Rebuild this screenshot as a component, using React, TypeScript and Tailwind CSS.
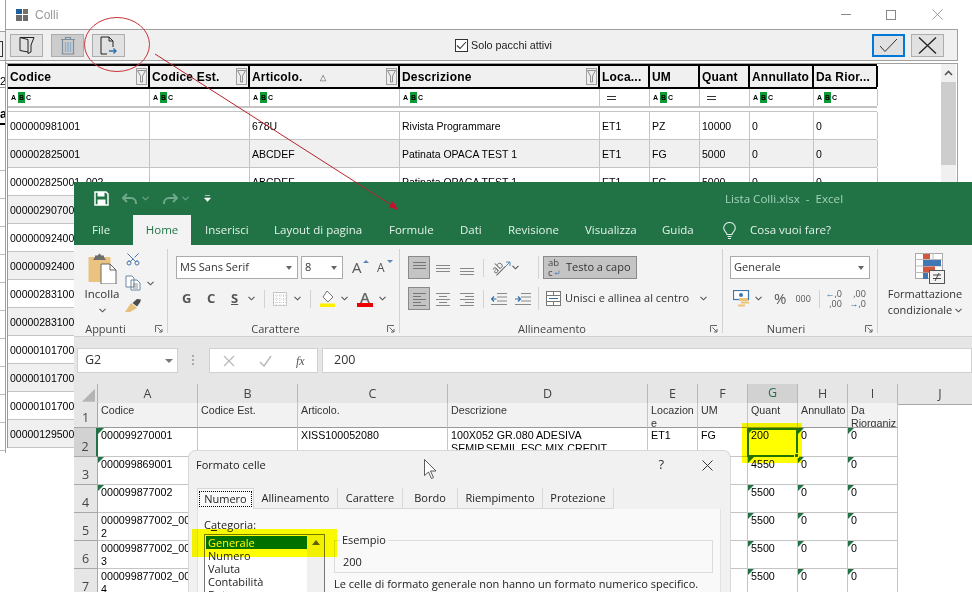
import React from 'react';
import { Scissors } from 'lucide-react';

const arial = "[font-family:'Liberation_Sans',sans-serif]";
const ui = "[font-family:'Open_Sans',sans-serif]";

const backRows = [
  ['000000981001', '', '678U', 'Rivista Programmare', 'ET1', 'PZ', '10000', '0', '0'],
  ['000002825001', '', 'ABCDEF', 'Patinata OPACA TEST 1', 'ET1', 'FG', '5000', '0', '0'],
  ['000002825001_002', '', 'ABCDEF', 'Patinata OPACA TEST 1', 'ET1', 'FG', '5000', '0', '0'],
  ['000002907001'], ['000000924001'], ['000000924002'], ['000002831001'], ['000002831002'],
  ['000001017001'], ['000001017002'], ['000001017003'], ['000001295001'],
];

const backHeaders = [
  { label: 'Codice', filter: true },
  { label: 'Codice Est.', filter: true },
  { label: 'Articolo.', filter: true, sort: true },
  { label: 'Descrizione', filter: true },
  { label: 'Loca...' },
  { label: 'UM' },
  { label: 'Quant' },
  { label: 'Annullato' },
  { label: 'Da Rior...' },
];

const backFilters = ['abc', 'abc', 'abc', 'abc', 'eq', 'abc', 'eq', 'abc', 'abc'];
const backCols = 'grid grid-cols-[142px_100px_150px_200px_50px_50px_50px_64px_64px]';
const sheetCols = 'grid grid-cols-[24px_100px_100px_150px_200px_50px_50px_50px_50px_50px_1fr]';

const tabs = [
  { label: 'Inserisci', w: 'w-[69px]' },
  { label: 'Layout di pagina', w: 'w-[115px]' },
  { label: 'Formule', w: 'w-[71px]' },
  { label: 'Dati', w: 'w-[48px]' },
  { label: 'Revisione', w: 'w-[77px]' },
  { label: 'Visualizza', w: 'w-[77px]' },
  { label: 'Guida', w: 'w-[60px]' },
];

type SheetRow = { n: number; h: string; cells: string[][] };

const sheetRows: SheetRow[] = [
  { n: 2, h: 'h-[29px]', cells: [['000099270001'], [], ['XISS100052080'], ['100X052 GR.080 ADESIVA', 'SEMIP.SEMIL.FSC MIX CREDIT'], ['ET1'], ['FG'], ['200'], ['0'], ['0']] },
  { n: 3, h: 'h-[28px]', cells: [['000099869001'], [], [], [], [], [], ['4550'], ['0'], ['0']] },
  { n: 4, h: 'h-[28px]', cells: [['000099877002'], [], [], [], [], [], ['5500'], ['0'], ['0']] },
  { n: 5, h: 'h-[28px]', cells: [['000099877002_00', '2'], [], [], [], [], [], ['5500'], ['0'], ['0']] },
  { n: 6, h: 'h-[28px]', cells: [['000099877002_00', '3'], [], [], [], [], [], ['5500'], ['0'], ['0']] },
  { n: 7, h: 'h-[28px]', cells: [['000099877002_00', '4'], [], [], [], [], [], ['5500'], ['0'], ['0']] },
];

function Chevron({ className = 'text-[#555]' }: { className?: string }) {
  return (
    <svg width="7" height="5" viewBox="0 0 7 5" className={className}>
      <path d="M0.5 0.8 3.5 3.8 6.5 0.8" fill="none" stroke="currentColor" strokeWidth="1.1" />
    </svg>
  );
}

function Launcher() {
  return (
    <svg width="8" height="8" viewBox="0 0 8 8">
      <path d="M0.5 7V0.5H7M2.5 2.5 7 7M7 4V7H4" fill="none" stroke="#666" strokeWidth="1" />
    </svg>
  );
}

function Funnel() {
  return (
    <span className="ml-auto mr-[1px] flex h-[17px] w-[11px] shrink-0 items-center justify-center border border-[#a0a0a0] bg-[#eeeeee]">
      <svg width="9" height="13" viewBox="0 0 9 13">
        <path d="M0.5 0.5h8L5.5 6v6h-2V6z" fill="none" stroke="#777" strokeWidth="0.8" />
      </svg>
    </span>
  );
}

function AbcTag() {
  return (
    <span className={`flex h-[11px] items-center pl-[3px] text-[7px] font-bold leading-none text-black ${arial}`}>
      <span className="mr-[2px]">A</span>
      <span className="mr-[1px] flex h-[11px] w-[7px] items-center justify-center bg-[#109a35]">B</span>
      <span>C</span>
    </span>
  );
}

function ToolButton({ children, dim = false }: { children: React.ReactNode; dim?: boolean }) {
  return (
    <div className={`flex h-[23px] w-[33px] items-center justify-center border border-[#adadad] ${dim ? 'bg-[#cccccc]' : 'bg-[#e1e1e1]'}`}>
      {children}
    </div>
  );
}

function BackWindow() {
  return (
    <div className={`absolute left-[5px] top-0 h-[453px] w-[953px] border-l border-[#a0a0a0] bg-white ${arial}`}>
      <div className="flex h-[30px] items-center border-b border-[#a0a0a0] bg-white pl-[10px]">
        <div className="grid h-[12px] w-[12px] grid-cols-2 gap-[1px]">
          <span className="bg-[#1d5f9b]" />
          <span className="bg-[#7a6f64]" />
          <span className="bg-[#6b6b6b]" />
          <span className="bg-[#6b6b6b]" />
        </div>
        <span className="ml-[7px] text-[12px] text-[#9a9a9a]">Colli</span>
        <div className="ml-auto flex items-center">
          <span className="h-px w-[10px] bg-[#888]" />
          <span className="ml-[35px] h-[10px] w-[10px] border border-[#888]" />
          <svg width="11" height="11" viewBox="0 0 11 11" className="ml-[36px] mr-[15px]">
            <path d="M0.5 0.5 10.5 10.5M10.500 0.5 0.5 10.500" stroke="#888" strokeWidth="0.8" />
          </svg>
        </div>
      </div>

      <div className="flex h-[31px] items-center border-b border-r border-[#a0a0a0] bg-[#f0f0f0] pl-[4px]">
        <ToolButton>
          <svg width="16" height="18" viewBox="0 0 16 18">
            <path d="M1 1.500h14L12 9v7l-3 1.500V3.500L1 1.500v13l8 1.500" fill="none" stroke="#222" strokeWidth="1" />
          </svg>
        </ToolButton>
        <div className="ml-[8px]">
          <ToolButton dim>
            <svg width="16" height="19" viewBox="0 0 16 19">
              <path d="M1 3.500h14M5.500 3.500v-2h5v2M2.500 3.500v14.500h11V3.500" fill="none" stroke="#7d8f9c" strokeWidth="1.200" />
              <path d="M5.500 6v10M8 6v10M10.500 6v10" stroke="#8fb0cc" strokeWidth="1.400" />
            </svg>
          </ToolButton>
        </div>
        <div className="ml-[8px]">
          <ToolButton>
            <svg width="17" height="19" viewBox="0 0 17 19">
              <path d="M7 18H1V1h8l4 4v6M9 1v4h4" fill="none" stroke="#222" strokeWidth="1" />
              <path d="M9 15h7M13.500 12.500 16 15l-2.500 2.500" fill="none" stroke="#2f6fa8" strokeWidth="1.400" />
            </svg>
          </ToolButton>
        </div>
        <div className="ml-[330px] flex items-center">
          <span className="flex h-[13px] w-[13px] items-center justify-center border border-[#333] bg-white">
            <svg width="11" height="9" viewBox="0 0 11 9">
              <path d="M1 4.500 4 7.500 10 1" fill="none" stroke="#333" strokeWidth="1.100" />
            </svg>
          </span>
          <span className="ml-[3px] text-[10.800px] text-[#222]">Solo pacchi attivi</span>
        </div>
        <div className="ml-auto mr-[13px] flex items-center gap-[6px]">
          <div className="flex h-[23px] w-[33px] items-center justify-center border-2 border-[#0078d7] bg-[#e1e1e1]">
            <svg width="19" height="15" viewBox="0 0 19 15">
              <path d="M1 8 6 13.500 18 1" fill="none" stroke="#333" strokeWidth="1" />
            </svg>
          </div>
          <ToolButton>
            <svg width="19" height="17" viewBox="0 0 19 17">
              <path d="M1 0.500 18 16.500M18 0.500 1 16.500" stroke="#222" strokeWidth="1.300" />
            </svg>
          </ToolButton>
        </div>
      </div>

      <div className="mt-[2px] h-[389px] border-r border-t border-[#a0a0a0]">
        <div className="flex">
          <div className="ml-px w-[870px] border-l border-[#999]">
            <div className={`${backCols} h-[25px] border-y-2 border-black bg-[#f0f0f0] text-[12px] font-bold tracking-[0.2px] text-black`}>
              {backHeaders.map((h) => (
                <div key={h.label} className="relative flex items-center border-r-2 border-black pl-[2px]">
                  <span className="whitespace-nowrap">{h.label}</span>
                  {h.sort && <span className="absolute left-[70px] top-[6px] text-[8px] text-[#888]">△</span>}
                  {h.filter && <Funnel />}
                </div>
              ))}
            </div>
            <div className={`${backCols} h-[19px] border-b-2 border-[#c4c4c4] bg-white`}>
              {backFilters.map((f, i) => (
                <div key={i} className="flex items-center border-r border-[#c4c4c4]">
                  {f === 'abc' ? <AbcTag /> : <span className="mx-[7px] h-[4px] w-[9px] border-y border-[#333]" />}
                </div>
              ))}
            </div>
            <div className="h-[4px] border-b border-[#c4c4c4]" />
            {backRows.map((row, i) => (
              <div key={i} className={`${backCols} h-[28px] border-b border-[#c4c4c4] text-[10.500px] text-black ${i % 2 === 1 ? 'bg-[#f0f0f0]' : 'bg-white'}`}>
                {backHeaders.map((h, c) => (
                  <div key={h.label} className="flex items-center overflow-hidden whitespace-nowrap border-r border-[#c4c4c4] pl-[2px] pt-[2px]">
                    {row[c] ?? ''}
                  </div>
                ))}
              </div>
            ))}
          </div>
          <div className="ml-[64px] flex h-[120px] w-[15px] flex-col bg-[#f0f0f0]">
            <div className="flex h-[18px] items-center justify-center">
              <svg width="9" height="6" viewBox="0 0 9 6">
                <path d="M1 5 4.500 1.500 8 5" fill="none" stroke="#555" strokeWidth="1.600" />
              </svg>
            </div>
            <div className="h-[83px] bg-[#cdcdcd]" />
          </div>
        </div>
      </div>
    </div>
  );
}

function BehindStrip() {
  return (
    <div className={`absolute left-0 top-[31px] flex h-[420px] w-[5px] flex-col bg-[#f0f0f0] text-[11px] text-black ${arial}`}>
      <div className="h-[30px] border-y border-[#a0a0a0]">
        <div className="mt-[9px] h-[16px] w-[3px] border-y border-r border-[#333]" />
      </div>
      <div className="h-[26px] bg-white pt-[15px] leading-none">2</div>
      <div className="h-[37px] border-t border-[#999] bg-white pt-[20px] text-[12px] font-bold leading-none">a</div>
      <div className="h-[20px] border-t-2 border-black bg-white" />
      {Array.from({ length: 11 }).map((_, i) => (
        <div key={i} className="h-[28px] shrink-0 border-b border-[#bbb] bg-white" />
      ))}
    </div>
  );
}

function Bars({ lines, dark = false }: { lines: number[][]; dark?: boolean }) {
  return (
    <svg width="15" height="16" viewBox="0 0 15 16">
      {lines.map((l, i) => (
        <path key={i} d={`M${l[0]} ${l[2]}.5H${l[1]}`} stroke={dark ? '#777' : '#888'} strokeWidth="1" />
      ))}
    </svg>
  );
}

function Sep({ className = 'h-[23px]' }: { className?: string }) {
  return <span className={`w-px bg-[#d2d2d2] ${className}`} />;
}

function GroupLabel({ label, className = '' }: { label: string; className?: string }) {
  return (
    <div className={`relative mt-auto flex h-[17px] items-center justify-center pt-[1px] text-[11px] text-[#444] ${className}`}>
      {label}
      <span className="absolute right-[4px] top-[5px]">
        <Launcher />
      </span>
    </div>
  );
}

function Ribbon() {
  return (
    <div className={`flex h-[92px] items-start border-b border-[#d0d0d0] bg-[#f3f3f3] pt-[4px] text-[11px] ${ui}`}>
      {/* Appunti */}
      <div className="flex h-[88px] w-[93px] flex-col">
        <div className="flex">
          <div className="ml-[8px] flex w-[40px] flex-col items-center">
            <svg width="29" height="31" viewBox="0 0 29 31" className="mt-[4px]">
              <rect x="0.500" y="4" width="22" height="25" fill="#e9c37f" />
              <path d="M7 4V2.500h2.500L11.500 0.500l2 2H16V4l2 3H5z" fill="#6e6e6e" />
              <path d="M13 11h9l6 6v14H13z" fill="#fff" stroke="#666" strokeWidth="1" />
              <path d="M22 11v6h6" fill="none" stroke="#666" strokeWidth="1" />
            </svg>
            <span className="mt-[2px] text-[11.500px] leading-[16px] text-[#333]">Incolla</span>
            <Chevron className="mt-[6px] text-[#555]" />
          </div>
          <div className="ml-[3px] flex flex-col">
            <Scissors size={16} strokeWidth={1.500} className="mt-[2px] -rotate-90 text-[#4a78a8]" />
            <div className="mt-[8px] flex items-center">
              <svg width="16" height="16" viewBox="0 0 16 16">
                <path d="M1 1h6l2 2v9H1zM6 5h6l3 3v7H6z" fill="#fff" stroke="#6a86a0" strokeWidth="1" />
                <path d="M8 9h5M8 11h5M8 13h5" stroke="#777" strokeWidth="0.800" />
              </svg>
              <Chevron className="ml-[6px] text-[#555]" />
            </div>
            <svg width="17" height="15" viewBox="0 0 17 15" className="mt-[7px]">
              <path d="M0 14 6 5l6 5-7 4z" fill="#e6c07a" />
              <path d="M7.500 5 12 1l4 0.500-1 3-3 4z" fill="#4c4c4c" />
            </svg>
          </div>
        </div>
        <GroupLabel label="Appunti" className="pr-[30px]" />
      </div>
      <Sep className="h-[84px]" />

      {/* Carattere */}
      <div className="flex h-[88px] w-[231px] flex-col pl-[8px] pt-[7px]">
        <div className="flex h-[23px] items-center">
          <div className="flex h-[23px] w-[122px] items-center border border-[#ababab] bg-white pl-[3px] text-[#333]">
            MS Sans Serif
            <span className="ml-auto mr-[5px] h-0 w-0 border-x-[3px] border-t-[4px] border-x-transparent border-t-[#666]" />
          </div>
          <div className="ml-[3px] flex h-[23px] w-[42px] items-center border border-[#ababab] bg-white pl-[3px] text-[#333]">
            8
            <span className="ml-auto mr-[5px] h-0 w-0 border-x-[3px] border-t-[4px] border-x-transparent border-t-[#666]" />
          </div>
          <span className="relative ml-[9px] w-[14px] text-[15px] leading-none text-[#555]">
            A
            <span className="absolute right-[-3px] top-0 h-0 w-0 border-x-[3px] border-b-[3px] border-x-transparent border-b-[#5a85b5]" />
          </span>
          <span className="relative ml-[11px] w-[13px] text-[12px] leading-none text-[#555]">
            A
            <span className="absolute right-[-3px] top-[-2px] h-0 w-0 border-x-[3px] border-t-[3px] border-x-transparent border-t-[#5a85b5]" />
          </span>
        </div>
        <div className="mt-[8px] flex h-[23px] items-center text-[13px] font-bold text-[#555]">
          <span className="ml-[6px] w-[14px]">G</span>
          <span className="ml-[11px] w-[14px]">C</span>
          <span className="ml-[10px] w-[11px] underline">S</span>
          <Chevron className="ml-[6px] text-[#555]" />
          <Sep className="ml-[9px] h-[18px]" />
          <svg width="14" height="14" viewBox="0 0 14 14" className="ml-[8px]">
            <rect x="0.500" y="0.500" width="13" height="13" fill="#fff" stroke="#999" strokeDasharray="1 1" />
            <path d="M7 0v14M0 7h14M3.500 0v14M10.500 0v14M0 3.500h14M0 10.500h14" stroke="#aaa" strokeWidth="0.500" strokeDasharray="1 1" />
          </svg>
          <Chevron className="ml-[7px] text-[#555]" />
          <Sep className="ml-[9px] h-[18px]" />
          <svg width="17" height="17" viewBox="0 0 17 17" className="ml-[8px]">
            <path d="M8 1l6 6-5 5-5-5z" fill="#fff" stroke="#777" strokeWidth="1" />
            <rect x="1" y="13.500" width="15" height="3.500" fill="#ffef00" />
          </svg>
          <Chevron className="ml-[5px] text-[#555]" />
          <span className="relative ml-[9px] flex h-[17px] w-[16px] justify-center text-[15px] font-semibold leading-[14px] text-[#666]">
            A
            <span className="absolute bottom-0 left-0 h-[4px] w-[16px] bg-[#ee0000]" />
          </span>
          <Chevron className="ml-[6px] text-[#555]" />
        </div>
        <GroupLabel label="Carattere" className="-ml-[8px] pr-[16px]" />
      </div>
      <Sep className="h-[84px]" />

      {/* Allineamento */}
      <div className="flex h-[88px] w-[322px] flex-col pl-[8px] pt-[7px]">
        <div className="flex h-[23px] items-center">
          <div className="flex h-[23px] w-[22px] items-center justify-center border border-[#8a8a8a] bg-[#c4c4c4]">
            <Bars dark lines={[[1, 14, 2], [1, 14, 5], [1, 14, 8]]} />
          </div>
          <span className="ml-[6px]"><Bars lines={[[0, 14, 5], [0, 14, 8], [0, 14, 11]]} /></span>
          <span className="ml-[9px]"><Bars lines={[[0, 14, 8], [0, 14, 11], [0, 14, 14]]} /></span>
          <Sep className="ml-[8px] h-[18px]" />
          <span className="relative ml-[7px] flex h-[20px] w-[20px] items-center">
            <span className="-rotate-45 text-[10.500px] leading-none text-[#666] underline">ab</span>
            <svg width="9" height="9" viewBox="0 0 9 9" className="absolute right-0 top-[3px]">
              <path d="M1 8 8 1M4 1h4v4" fill="none" stroke="#5a85b5" strokeWidth="1" />
            </svg>
          </span>
          <Chevron className="ml-[1px] text-[#555]" />
          <Sep className="ml-[19px] h-[23px]" />
          <div className="ml-[4px] flex h-[23px] w-[94px] items-center border border-[#8a8a8a] bg-[#c4c4c4] pl-[4px] text-[#333]">
            <span className="mr-[5px] flex w-[13px] flex-col text-[9.500px] leading-[10px] text-[#444]">
              <span>ab</span>
              <span className="flex items-center">
                c
                <svg width="6" height="6" viewBox="0 0 6 6" className="ml-[1px]">
                  <path d="M5 0.500V3.500H1M2.500 2 1 3.500 2.500 5" fill="none" stroke="#5a85b5" strokeWidth="0.800" />
                </svg>
              </span>
            </span>
            Testo a capo
          </div>
        </div>
        <div className="mt-[8px] flex h-[23px] items-center">
          <div className="flex h-[23px] w-[22px] items-center justify-center border border-[#8a8a8a] bg-[#c4c4c4]">
            <Bars dark lines={[[1, 14, 2], [1, 9, 5], [1, 14, 8], [1, 9, 11], [1, 14, 14]]} />
          </div>
          <span className="ml-[6px]"><Bars lines={[[0, 14, 2], [3, 11, 5], [0, 14, 8], [3, 11, 11], [0, 14, 14]]} /></span>
          <span className="ml-[9px]"><Bars lines={[[0, 14, 2], [5, 14, 5], [0, 14, 8], [5, 14, 11], [0, 14, 14]]} /></span>
          <Sep className="ml-[8px] h-[18px]" />
          <svg width="16" height="14" viewBox="0 0 16 14" className="ml-[7px]">
            <path d="M6 1.500h10M6 5h10M6 9h10M0 12.500h16" stroke="#888" />
            <path d="M0.500 7h5M3 4.500 0.500 7 3 9.500" fill="none" stroke="#2f6fa8" strokeWidth="1.200" />
          </svg>
          <svg width="16" height="14" viewBox="0 0 16 14" className="ml-[8px]">
            <path d="M6 1.500h10M6 5h10M6 9h10M0 12.500h16" stroke="#888" />
            <path d="M0 7h5M3 4.500 5.500 7 3 9.500" fill="none" stroke="#2f6fa8" strokeWidth="1.200" />
          </svg>
          <Sep className="ml-[7px] h-[23px]" />
          <svg width="15" height="15" viewBox="0 0 15 15" className="ml-[7px]">
            <rect x="0.500" y="0.500" width="14" height="14" fill="#fff" stroke="#777" />
            <path d="M0 4.500h15M0 10.500h15M7.500 0v4.500M7.500 10.500V15" stroke="#777" />
            <path d="M3 7.500h9" stroke="#2f6fa8" />
          </svg>
          <span className="ml-[4px] whitespace-nowrap text-[#333]">Unisci e allinea al centro</span>
          <Chevron className="ml-[11px] text-[#555]" />
        </div>
        <GroupLabel label="Allineamento" className="-ml-[8px] pr-[18px]" />
      </div>
      <Sep className="h-[84px]" />

      {/* Numeri */}
      <div className="flex h-[88px] w-[154px] flex-col pl-[7px] pt-[7px]">
        <div className="flex h-[23px] w-[140px] items-center border border-[#ababab] bg-white pl-[3px] text-[#333]">
          Generale
          <span className="ml-auto mr-[5px] h-0 w-0 border-x-[3px] border-t-[4px] border-x-transparent border-t-[#666]" />
        </div>
        <div className="mt-[8px] flex h-[23px] items-center">
          <svg width="17" height="17" viewBox="0 0 17 17" className="ml-[3px]">
            <rect x="0.500" y="0.500" width="15" height="9" fill="#fff" stroke="#3c78b0" strokeWidth="1.200" />
            <circle cx="8" cy="5" r="2" fill="#3c78b0" />
            <rect x="6" y="8" width="9" height="3" fill="#edc27a" />
            <rect x="8" y="11.500" width="8" height="2" fill="#edc27a" />
            <rect x="5" y="14.500" width="7" height="2" fill="#edc27a" />
          </svg>
          <Chevron className="ml-[5px] text-[#555]" />
          <span className="ml-[12px] text-[15px] leading-none text-[#555]">%</span>
          <span className="ml-[9px] text-[9px] leading-none text-[#555]">000</span>
          <Sep className="ml-[8px] h-[18px]" />
          <span className="ml-[7px] flex w-[15px] flex-col items-end text-[9px] leading-[10px] text-[#555]">
            <span><span className="text-[#2f6fa8]">←</span>,0</span>
            <span>,00</span>
          </span>
          <span className="ml-[9px] flex w-[15px] flex-col items-end text-[9px] leading-[10px] text-[#555]">
            <span>,00</span>
            <span><span className="text-[#2f6fa8]">→</span>,0</span>
          </span>
        </div>
        <GroupLabel label="Numeri" className="-ml-[7px] pr-[28px]" />
      </div>
      <Sep className="h-[84px]" />

      {/* Stili */}
      <div className="flex w-[94px] flex-col items-center pt-[4px]">
        <svg width="31" height="31" viewBox="0 0 31 31" className="ml-[10px]">
          <rect x="0.500" y="0.500" width="27" height="25" fill="#fff" stroke="#aaa" />
          <path d="M0 6.500h28M0 13h28M0 19.500h28M9 0v26M18 0v26" stroke="#bbb" />
          <rect x="8" y="1" width="7" height="5" fill="#d2573c" />
          <rect x="8" y="7" width="18" height="6" fill="#3f78b5" />
          <rect x="8" y="13.500" width="12" height="6" fill="#d2573c" />
          <rect x="8" y="20" width="5" height="6" fill="#3f78b5" />
          <rect x="14.500" y="17.500" width="15" height="13" fill="#f3f3f3" stroke="#555" />
          <path d="M18 22h8M18 25.500h8M24 20l-4 8" stroke="#444" />
        </svg>
        <span className="mt-[2px] leading-[16px] text-[#333]">Formattazione</span>
        <span className="flex items-center leading-[16px] text-[#333]">
          condizionale
          <Chevron className="ml-[3px] text-[#555]" />
        </span>
      </div>
    </div>
  );
}

function FormulaBar() {
  return (
    <div className={`flex h-[47px] items-start bg-[#e6e6e6] pl-[3px] pt-[11px] ${ui}`}>
      <div className="flex h-[25px] w-[101px] items-center border border-[#d0d0d0] bg-white pl-[7px] text-[12.500px] text-[#333]">
        G2
        <span className="ml-auto mr-[4px] h-0 w-0 border-x-[4px] border-t-[4px] border-x-transparent border-t-[#777]" />
      </div>
      <div className="ml-[14px] mt-[7px] flex w-[3px] flex-col gap-[2px]">
        <span className="h-[2px] w-[2px] bg-[#aaa]" />
        <span className="h-[2px] w-[2px] bg-[#aaa]" />
        <span className="h-[2px] w-[2px] bg-[#aaa]" />
      </div>
      <div className="ml-[14px] flex h-[25px] w-[109px] items-center border border-[#d0d0d0] bg-white">
        <svg width="12" height="12" viewBox="0 0 12 12" className="ml-[13px]">
          <path d="M1 1 11 11M11 1 1 11" stroke="#bbb" strokeWidth="1.300" />
        </svg>
        <svg width="13" height="12" viewBox="0 0 13 12" className="ml-[24px]">
          <path d="M1 7 5 11 12 1" fill="none" stroke="#bbb" strokeWidth="1.500" />
        </svg>
        <span className="ml-[24px] [font-family:'Liberation_Serif',serif] text-[12px] italic leading-none text-[#555]">fx</span>
      </div>
      <div className="ml-[4px] flex h-[25px] flex-1 items-center border border-[#d0d0d0] bg-white pl-[11px] text-[12.500px] text-[#333]">200</div>
    </div>
  );
}

function Triangle() {
  return <span className="absolute left-0 top-0 h-[6px] w-[6px] bg-[#217346] [clip-path:polygon(0_0,100%_0,0_100%)]" />;
}

function Sheet() {
  const letters = ['A', 'B', 'C', 'D', 'E', 'F', 'G', 'H', 'I'];
  const titles: string[][] = [['Codice'], ['Codice Est.'], ['Articolo.'], ['Descrizione'], ['Locazion', 'e'], ['UM'], ['Quant'], ['Annullato'], ['Da', 'Riorganiz']];
  return (
    <div className="relative bg-white">
      <div className={`${sheetCols} h-[19px] ${ui} text-[12.500px] text-[#444]`}>
        <div className="flex items-end justify-end border-b border-r border-[#b0b0b0] bg-[#e6e6e6] p-[2px]">
          <span className="h-[13px] w-[13px] bg-[#b4b4b4] [clip-path:polygon(100%_0,100%_100%,0_100%)]" />
        </div>
        {letters.map((l) => (
          <div
            key={l}
            className={`flex items-center justify-center border-r border-[#b8b8b8] ${l === 'G' ? 'border-b-2 border-b-[#217346] bg-[#d2d2d2] text-[#217346]' : 'border-b border-b-[#a8a8a8] bg-[#e6e6e6]'}`}
          >
            {l}
          </div>
        ))}
        <div className="flex items-center justify-center border-b border-[#a8a8a8] bg-[#e6e6e6] pl-[10px]">J</div>
      </div>

      <div className={`${sheetCols} h-[25px] text-[10.700px] leading-[13px] text-[#333] ${arial}`}>
        <div className={`flex items-end justify-center border-b border-r border-[#a8a8a8] bg-[#e6e6e6] pb-[1px] text-[12.500px] leading-[16px] text-[#444] ${ui}`}>1</div>
        {titles.map((t, i) => (
          <div key={i} className="overflow-hidden border-b border-r border-b-[#999] border-r-[#c4c4c4] bg-[#f2f2f2] pl-[3px] pt-[1px]">
            {t.map((line) => <div key={line}>{line}</div>)}
          </div>
        ))}
        <div />
      </div>

      {sheetRows.map((row) => (
        <div key={row.n} className={`${sheetCols} ${row.h} text-[10.700px] leading-[13px] text-black ${arial}`}>
          <div className={`flex items-end justify-center border-b border-[#a8a8a8] pb-[1px] text-[12.500px] leading-[16px] text-[#444] ${ui} ${row.n === 2 ? 'border-r-2 border-r-[#217346] bg-[#d2d2d2]' : 'border-r bg-[#e6e6e6]'}`}>
            {row.n}
          </div>
          {row.cells.map((c, i) => (
            <div key={i} className="relative overflow-hidden border-b border-r border-[#c4c4c4] pl-[3px] pt-[1px]">
              {(i === 0 && row.n < 5) || (i >= 6) ? <Triangle /> : null}
              {c.map((line) => <div key={line} className="whitespace-nowrap">{line}</div>)}
            </div>
          ))}
          <div />
        </div>
      ))}

      {/* selected cell frame */}
      <div className="absolute left-[673px] top-[44px] h-[29px] w-[51px] border-2 border-[#217346]">
        <span className="absolute bottom-[-3px] right-[-3px] h-[5px] w-[5px] border border-white bg-[#217346]" />
      </div>
      <div className="absolute left-[668px] top-[39px] h-[40px] w-[60px] bg-[#ffff00] mix-blend-multiply" />
    </div>
  );
}

function ExcelWindow() {
  return (
    <div className="absolute left-[74px] top-[182px] h-[410px] w-[898px] overflow-hidden bg-[#e6e6e6]">
      <div className={`flex h-[33px] items-center bg-[#217346] pl-[20px] ${ui}`}>
        <svg width="15" height="15" viewBox="0 0 15 15">
          <path d="M1 1h11l2 2v11H1z" fill="none" stroke="#fff" strokeWidth="1.500" />
          <rect x="3.500" y="1" width="7" height="4.500" fill="#fff" />
          <rect x="3.500" y="8.500" width="8" height="5.500" fill="#fff" />
        </svg>
        <svg width="16" height="12" viewBox="0 0 16 12" className="ml-[13px]">
          <path d="M5 1 1 5l4 4M1 5h8a5 5 0 0 1 5 5v1" fill="none" stroke="#6fa88a" strokeWidth="2" />
        </svg>
        <Chevron className="ml-[4px] text-[#6fa88a]" />
        <svg width="16" height="12" viewBox="0 0 16 12" className="ml-[13px]">
          <path d="M11 1l4 4-4 4M15 5H7a5 5 0 0 0-5 5v1" fill="none" stroke="#6fa88a" strokeWidth="2" />
        </svg>
        <Chevron className="ml-[4px] text-[#6fa88a]" />
        <svg width="7" height="7" viewBox="0 0 7 7" className="ml-[15px]">
          <path d="M1 0.500h5M0.500 3h6L3.500 6.500z" fill="#fff" stroke="#fff" strokeWidth="0.600" />
        </svg>
        <span className="ml-[514px] whitespace-pre text-[11.600px] text-[#a3d4ba]">Lista Colli.xlsx  -  Excel</span>
      </div>

      <div className={`flex h-[30px] items-stretch bg-[#217346] text-[11.500px] text-[#e3f1e9] ${ui}`}>
        <div className="flex w-[59px] items-center pl-[18px]">File</div>
        <div className="flex w-[58px] items-center justify-center bg-[#f3f3f3] text-[#217346]">Home</div>
        {tabs.map((t) => (
          <div key={t.label} className={`flex ${t.w} items-center whitespace-nowrap pl-[14px]`}>{t.label}</div>
        ))}
        <div className="ml-[15px] flex items-center">
          <svg width="13" height="17" viewBox="0 0 13 17">
            <path d="M4 12.500C3.500 10 .7 9 .7 6A5.800 5.500 0 0 1 12.300 6c0 3-2.800 4-3.300 6.500zM4.500 14.500h4M5 16.500h3" fill="none" stroke="#e3f1e9" strokeWidth="1.100" />
          </svg>
          <span className="ml-[14px] whitespace-nowrap">Cosa vuoi fare?</span>
        </div>
      </div>

      <Ribbon />
      <FormulaBar />
      <Sheet />
    </div>
  );
}

function FormatDialog() {
  const otherTabs = [
    { label: 'Allineamento', w: 'w-[84px]' },
    { label: 'Carattere', w: 'w-[65px]' },
    { label: 'Bordo', w: 'w-[55px]' },
    { label: 'Riempimento', w: 'w-[85px]' },
    { label: 'Protezione', w: 'w-[71px]' },
  ];
  return (
    <div className={`absolute left-[188px] top-[450px] h-[142px] w-[543px] overflow-hidden rounded-t-[8px] border border-b-0 border-[#d8d8d8] bg-[#f1f1f1] text-[11px] text-[#222] ${ui}`}>
      <div className="flex h-[28px] items-center pl-[7px]">
        Formato celle
        <span className="ml-auto text-[13px] text-[#333]">?</span>
        <svg width="11" height="11" viewBox="0 0 11 11" className="ml-[38px] mr-[17px]">
          <path d="M0.500 0.500 10.500 10.500M10.500 0.500 0.500 10.500" stroke="#333" strokeWidth="1" />
        </svg>
      </div>
      <div className="ml-[8px] mt-[9px] flex h-[21px] items-stretch">
        <div className="flex w-[57px] items-center justify-center border border-b-0 border-[#d8d8d8] bg-[#f9f9f9]">
          <span className="border border-dotted border-black px-[4px] leading-[14px]">Numero</span>
        </div>
        {otherTabs.map((t) => (
          <div key={t.label} className={`flex ${t.w} items-center justify-center border-b border-r border-[#d8d8d8]`}>{t.label}</div>
        ))}
      </div>
      <div className="ml-[8px] flex h-[84px] w-[524px] border-x border-[#e2e2e2] bg-[#f9f9f9] pl-[6px] pt-[9px]">
        <div className="w-[121px]">
          <div className="leading-[14px]">C<span className="underline">a</span>tegoria:</div>
          <div className="mt-[2px] flex h-[60px] border border-[#777] bg-white leading-[13px]">
            <div className="w-[102px] pl-px pt-px">
              <div className="h-[13px] bg-[#0070c8] pl-[2px] text-white">Generale</div>
              <div className="pl-[2px]">Numero</div>
              <div className="pl-[2px]">Valuta</div>
              <div className="pl-[2px]">Contabilità</div>
              <div className="pl-[2px]">Data</div>
            </div>
            <div className="flex w-[17px] justify-center bg-[#f0f0f0] pt-[5px]">
              <span className="h-0 w-0 border-x-[4px] border-b-[5px] border-x-transparent border-b-[#606060]" />
            </div>
          </div>
        </div>
        <div className="ml-[9px] w-[379px]">
          <div className="relative mt-[22px] h-[33px] border border-[#dcdcdc] pl-[8px] pt-[13px]">
            <span className="absolute left-[5px] top-[-8px] bg-[#f9f9f9] px-[2px] leading-[14px]">Esempio</span>
            200
          </div>
          <div className="mt-[4px] whitespace-nowrap leading-[14px]">Le celle di formato generale non hanno un formato numerico specifico.</div>
        </div>
      </div>
      <div className="absolute left-[3px] top-[78px] h-[28px] w-[145px] bg-[#ffff00] mix-blend-multiply" />
    </div>
  );
}

function Annotations() {
  return (
    <svg className="absolute left-0 top-0 h-[592px] w-[972px]" viewBox="0 0 972 592" fill="none">
      <ellipse cx="117" cy="44.500" rx="32.500" ry="27" stroke="#c9333b" strokeWidth="1" />
      <path d="M155 54 393 206" stroke="#b8232c" strokeWidth="1" />
      <path d="M398 210 389 207 393 201z" fill="#c8102e" />
      <path d="M424.500 459.500v16l4-3.500 3 6.500 2-1-3-6.500h5.500z" fill="#fff" stroke="#333" strokeWidth="0.800" />
    </svg>
  );
}

export default function App() {
  return (
    <div className="relative h-[592px] w-[972px] overflow-hidden bg-white">
      <BehindStrip />
      <BackWindow />
      <ExcelWindow />
      <FormatDialog />
      <Annotations />
    </div>
  );
}
